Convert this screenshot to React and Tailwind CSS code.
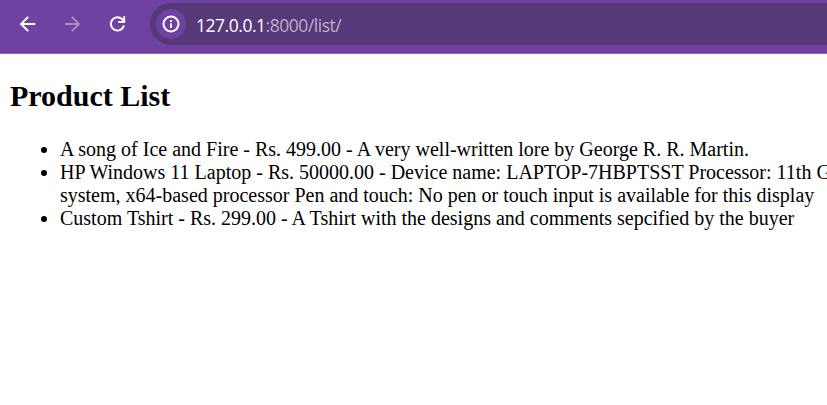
import React from "react";

function BackIcon({ className }) {
  return (
    <svg viewBox="0 0 24 24" className={className} fill="none" stroke="currentColor" strokeWidth="2">
      <path d="M19.2 12H5.8M12.2 4.9L5.1 12l7.1 7.1" />
    </svg>
  );
}

function ReloadIcon({ className }) {
  return (
    <svg viewBox="0 0 24 24" className={className} fill="none" stroke="currentColor" strokeWidth="2">
      <path d="M17.9 13.4A6.6 6.6 0 1 1 16.2 7.3L18 9.2" />
      <path d="M18.2 4.2V10H12.2" />
    </svg>
  );
}

function InfoIcon({ className }) {
  return (
    <svg viewBox="0 0 18 18" className={className} fill="none" stroke="currentColor">
      <circle cx="9" cy="9" r="7.5" strokeWidth="2" />
      <path d="M9 8.2v4.8M9 5v1.9" strokeWidth="1.8" />
    </svg>
  );
}

function Toolbar() {
  return (
    <header className="flex h-[54px] items-start border-b border-[#9068b8] bg-[#6e42a1] pt-[3px]">
      <div className="flex h-[42px] w-[150px] shrink-0 items-center pl-4 text-white">
        <BackIcon className="h-6 w-6" />
        <BackIcon className="ml-5 h-6 w-6 rotate-180 text-[#a78bc7]" />
        <ReloadIcon className="ml-[22px] h-6 w-6" />
      </div>
      <div className="flex h-[42px] grow items-center rounded-l-full bg-[#573878] pl-[6px]">
        <span className="flex h-[30px] w-[30px] items-center justify-center rounded-full bg-[#6e42a1] text-white">
          <InfoIcon className="h-[18px] w-[18px]" />
        </span>
        <span className="ml-[10px] pt-px font-['Open_Sans',sans-serif] text-[17.5px] leading-6 tracking-[-0.47px] text-[#bcafc9]">
          <span className="text-white">127.0.0.1</span>:8000/list/
        </span>
      </div>
    </header>
  );
}

export default function App() {
  return (
    <div className="h-[405px] w-[827px] overflow-hidden bg-white">
      <Toolbar />
      <main className="px-[10px] pt-[25px] font-['Liberation_Serif',serif] text-black">
        <h2 className="text-[30px] leading-[34px] font-bold">Product List</h2>
        <ul className="mt-[25px] list-disc pl-[50px] text-[20px] leading-[23px] whitespace-nowrap">
          <li>A song of Ice and Fire - Rs. 499.00 - A very well-written lore by George R. R. Martin.</li>
          <li>
            HP Windows 11 Laptop - Rs. 50000.00 - Device name: LAPTOP-7HBPTSST Processor: 11th Gen
            <br />
            system, x64-based processor Pen and touch: No pen or touch input is available for this display
          </li>
          <li>Custom Tshirt - Rs. 299.00 - A Tshirt with the designs and comments sepcified by the buyer</li>
        </ul>
      </main>
    </div>
  );
}
